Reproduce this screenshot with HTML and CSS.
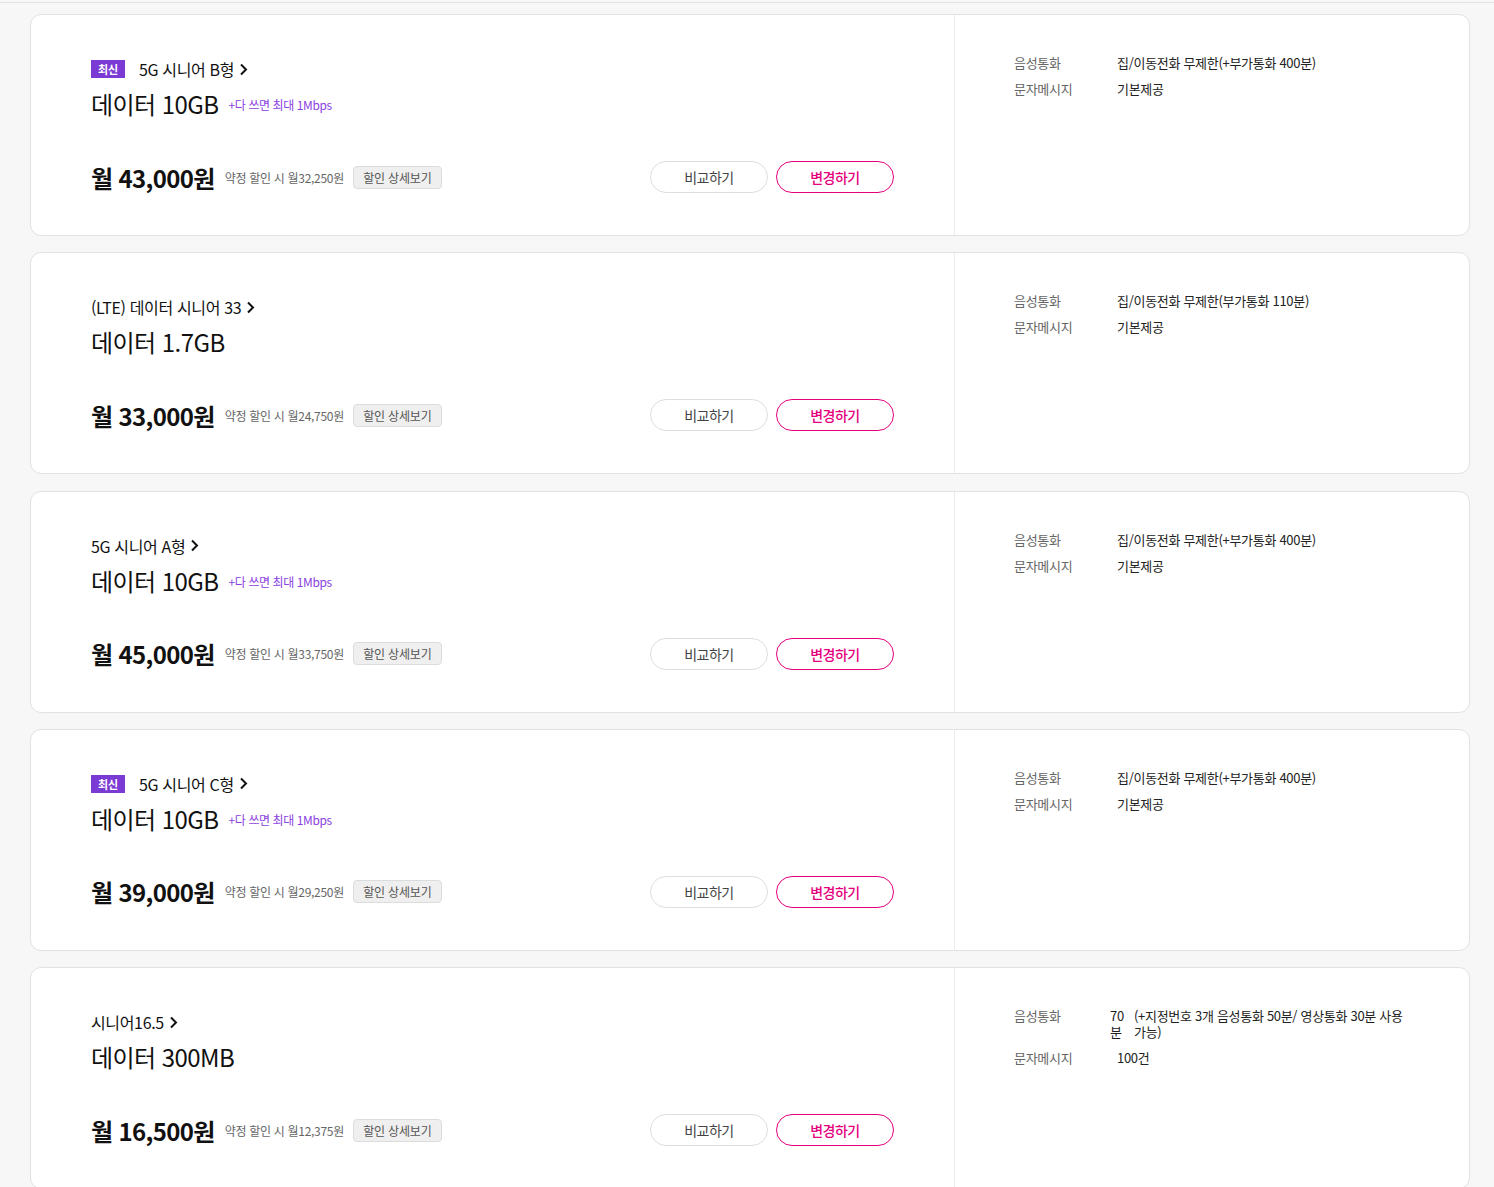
FILE: index.html
```html
<!DOCTYPE html>
<html lang="ko">
<head>
<meta charset="utf-8">
<title>요금제</title>
<link rel="stylesheet" href="styles.css">
</head>
<body>
<div class="page">
  <ul class="plan-list">
    <li class="plan-card">
      <div class="plan-main">
        <div class="plan-title"><span class="badge">최신</span><a class="plan-name">5G 시니어 B형<svg class="chev" width="9" height="13" viewBox="0 0 9 13"><path d="M2 1.5l5 5-5 5" fill="none" stroke="#111" stroke-width="2"/></svg></a></div>
        <div class="plan-data">데이터 10GB<span class="plan-extra">+다 쓰면 최대 1Mbps</span></div>
        <div class="plan-price-row">
          <strong class="price">월 43,000원</strong>
          <span class="discount">약정 할인 시 월32,250원</span>
          <button class="detail-btn">할인 상세보기</button>
          <div class="actions"><button class="btn">비교하기</button><button class="btn btn-primary">변경하기</button></div>
        </div>
      </div>
      <dl class="plan-spec">
        <div class="spec-row"><dt>음성통화</dt><dd>집/이동전화 무제한(+부가통화 400분)</dd></div>
        <div class="spec-row"><dt>문자메시지</dt><dd>기본제공</dd></div>
      </dl>
    </li>
    <li class="plan-card">
      <div class="plan-main">
        <div class="plan-title"><a class="plan-name">(LTE) 데이터 시니어 33<svg class="chev" width="9" height="13" viewBox="0 0 9 13"><path d="M2 1.5l5 5-5 5" fill="none" stroke="#111" stroke-width="2"/></svg></a></div>
        <div class="plan-data">데이터 1.7GB</div>
        <div class="plan-price-row">
          <strong class="price">월 33,000원</strong>
          <span class="discount">약정 할인 시 월24,750원</span>
          <button class="detail-btn">할인 상세보기</button>
          <div class="actions"><button class="btn">비교하기</button><button class="btn btn-primary">변경하기</button></div>
        </div>
      </div>
      <dl class="plan-spec">
        <div class="spec-row"><dt>음성통화</dt><dd>집/이동전화 무제한(부가통화 110분)</dd></div>
        <div class="spec-row"><dt>문자메시지</dt><dd>기본제공</dd></div>
      </dl>
    </li>
    <li class="plan-card">
      <div class="plan-main">
        <div class="plan-title"><a class="plan-name">5G 시니어 A형<svg class="chev" width="9" height="13" viewBox="0 0 9 13"><path d="M2 1.5l5 5-5 5" fill="none" stroke="#111" stroke-width="2"/></svg></a></div>
        <div class="plan-data">데이터 10GB<span class="plan-extra">+다 쓰면 최대 1Mbps</span></div>
        <div class="plan-price-row">
          <strong class="price">월 45,000원</strong>
          <span class="discount">약정 할인 시 월33,750원</span>
          <button class="detail-btn">할인 상세보기</button>
          <div class="actions"><button class="btn">비교하기</button><button class="btn btn-primary">변경하기</button></div>
        </div>
      </div>
      <dl class="plan-spec">
        <div class="spec-row"><dt>음성통화</dt><dd>집/이동전화 무제한(+부가통화 400분)</dd></div>
        <div class="spec-row"><dt>문자메시지</dt><dd>기본제공</dd></div>
      </dl>
    </li>
    <li class="plan-card">
      <div class="plan-main">
        <div class="plan-title"><span class="badge">최신</span><a class="plan-name">5G 시니어 C형<svg class="chev" width="9" height="13" viewBox="0 0 9 13"><path d="M2 1.5l5 5-5 5" fill="none" stroke="#111" stroke-width="2"/></svg></a></div>
        <div class="plan-data">데이터 10GB<span class="plan-extra">+다 쓰면 최대 1Mbps</span></div>
        <div class="plan-price-row">
          <strong class="price">월 39,000원</strong>
          <span class="discount">약정 할인 시 월29,250원</span>
          <button class="detail-btn">할인 상세보기</button>
          <div class="actions"><button class="btn">비교하기</button><button class="btn btn-primary">변경하기</button></div>
        </div>
      </div>
      <dl class="plan-spec">
        <div class="spec-row"><dt>음성통화</dt><dd>집/이동전화 무제한(+부가통화 400분)</dd></div>
        <div class="spec-row"><dt>문자메시지</dt><dd>기본제공</dd></div>
      </dl>
    </li>
    <li class="plan-card">
      <div class="plan-main">
        <div class="plan-title"><a class="plan-name">시니어16.5<svg class="chev" width="9" height="13" viewBox="0 0 9 13"><path d="M2 1.5l5 5-5 5" fill="none" stroke="#111" stroke-width="2"/></svg></a></div>
        <div class="plan-data">데이터 300MB</div>
        <div class="plan-price-row">
          <strong class="price">월 16,500원</strong>
          <span class="discount">약정 할인 시 월12,375원</span>
          <button class="detail-btn">할인 상세보기</button>
          <div class="actions"><button class="btn">비교하기</button><button class="btn btn-primary">변경하기</button></div>
        </div>
      </div>
      <dl class="plan-spec">
        <div class="spec-row"><dt>음성통화</dt><dd class="split"><span class="split-a">70분</span><span class="split-b">(+지정번호 3개 음성통화 50분/ 영상통화 30분 사용 가능)</span></dd></div>
        <div class="spec-row"><dt>문자메시지</dt><dd>100건</dd></div>
      </dl>
    </li>
  </ul>
</div>
</body>
</html>
```
FILE: styles.css
```css
* { box-sizing: border-box; }
html, body {
  margin: 0;
  padding: 0;
  background: #f7f7f7;
  font-family: "Noto Sans CJK KR", "Noto Sans", sans-serif;
  color: #111;
}
.page {
  margin-top: 2px;
  border-top: 1px solid #e3e3e3;
  padding: 11px 24px 0 30px;
}
.plan-list {
  list-style: none;
  margin: 0;
  padding: 0;
  display: flex;
  flex-direction: column;
  gap: 16.3px;
}
.plan-card {
  display: flex;
  background: #fff;
  border: 1px solid #e2e2e2;
  border-radius: 11px;
  height: 222px;
}
.plan-main {
  width: 924px;
  border-right: 1px solid #ececec;
  padding: 43px 60px 0 60px;
}
.plan-title {
  display: flex;
  align-items: center;
  height: 22px;
}
.badge {
  display: inline-flex;
  align-items: center;
  justify-content: center;
  width: 34px;
  height: 18px;
  background: #7c3ad4;
  color: #fff;
  font-size: 11px;
  font-weight: 700;
  margin-right: 14px;
}
.plan-name {
  display: inline-flex;
  align-items: center;
  font-size: 16px;
  letter-spacing: -0.35px;
  color: #111;
}
.chev { margin-left: 5px; }
.plan-data {
  margin-top: 8px;
  height: 32px;
  line-height: 32px;
  font-size: 24px;
  letter-spacing: -0.55px;
  display: flex;
  align-items: center;
}
.plan-extra {
  font-size: 12px;
  color: #8b3fe0;
  margin-left: 10px;
  letter-spacing: -0.4px;
  padding-top: 2px;
}
.plan-price-row {
  margin-top: 41px;
  height: 32px;
  display: flex;
  align-items: center;
}
.price {
  font-size: 24px;
  font-weight: 700;
  letter-spacing: -0.65px;
}
.discount {
  font-size: 12px;
  color: #666;
  margin-left: 10px;
  letter-spacing: -0.3px;
}
.detail-btn {
  margin-left: 9px;
  height: 23px;
  width: 89px;
  padding: 0;
  background: #efefef;
  border: 1px solid #dcdcdc;
  border-radius: 4px;
  font-family: inherit;
  font-size: 12px;
  color: #555;
  letter-spacing: -0.2px;
}
.actions {
  margin-left: auto;
  display: flex;
  gap: 8px;
}
.btn {
  width: 118px;
  height: 32px;
  border-radius: 16px;
  border: 1px solid #dedede;
  background: #fff;
  font-family: inherit;
  font-size: 14px;
  letter-spacing: -0.5px;
  color: #444;
  padding: 0;
}
.btn-primary {
  border-color: #e5007d;
  color: #e5007d;
  font-weight: 500;
}
.plan-spec {
  flex: 1;
  margin: 0;
  padding: 40px 60px 0 59px;
  display: flex;
  flex-direction: column;
  gap: 10px;
}
.spec-row {
  display: flex;
  font-size: 13px;
  line-height: 16px;
  letter-spacing: -0.3px;
}
.spec-row dt {
  width: 103px;
  flex: none;
  color: #666;
}
.spec-row dd {
  margin: 0;
  color: #222;
}
.spec-row dd.split {
  display: flex;
  margin-left: -7px;
}
.split-a {
  width: 24px;
  flex: none;
}
.split-b {
  width: 275px;
}
```
